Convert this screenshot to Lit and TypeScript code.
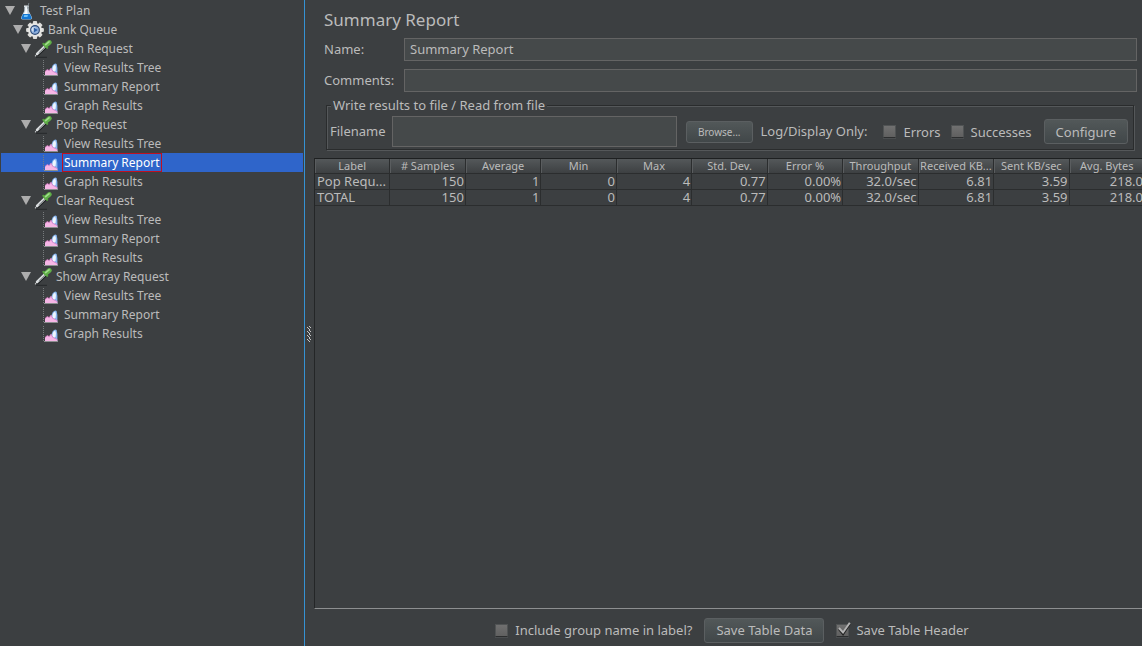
import { LitElement, html, css, svg, nothing } from "lit";
import { customElement } from "lit/decorators.js";
import { classMap } from "lit/directives/class-map.js";

type Kind = "plan" | "group" | "sampler" | "listener";
interface TreeNode {
  label: string;
  kind: Kind;
  selected?: boolean;
}

const requests = ["Push Request", "Pop Request", "Clear Request", "Show Array Request"];
const listeners = ["View Results Tree", "Summary Report", "Graph Results"];

const nodes: TreeNode[] = [
  { label: "Test Plan", kind: "plan" },
  { label: "Bank Queue", kind: "group" },
  ...requests.flatMap((r): TreeNode[] => [
    { label: r, kind: "sampler" },
    ...listeners.map((l): TreeNode => ({
      label: l,
      kind: "listener",
      selected: r === "Pop Request" && l === "Summary Report",
    })),
  ]),
];

const columns = [
  "Label", "# Samples", "Average", "Min", "Max", "Std. Dev.",
  "Error %", "Throughput", "Received KB...", "Sent KB/sec", "Avg. Bytes",
];
const rows = [
  ["Pop Requ...", "150", "1", "0", "4", "0.77", "0.00%", "32.0/sec", "6.81", "3.59", "218.0"],
  ["TOTAL", "150", "1", "0", "4", "0.77", "0.00%", "32.0/sec", "6.81", "3.59", "218.0"],
];

const teeth = [0, 45, 90, 135, 180, 225, 270, 315];

const icons = {
  plan: html`<svg class="icon" viewBox="0 0 18 18" aria-hidden="true">
    <path d="M6.4 4.5 L6.2 9 L3 15.6 Q2.6 17.6 4.6 17.6 H12.4 Q14.4 17.6 14 15.6 L10.8 9 L10.6 4.5Z" fill="#c3d0da"/>
    <path d="M7.4 5 L7.2 9.4 L5.4 12.6 H9.6 L8.8 5Z" fill="#f8fbfd"/>
    <path d="M5 12 H12 L13.6 15.8 Q13.7 17.2 12.4 17.2 H4.6 Q3.3 17.2 3.5 15.8Z" fill="#1478d4"/>
    <path d="M6.2 13 H10 L9.4 15 H5.8Z" fill="#6cc0fa"/>
    <path d="M6 4.2 H11" stroke="#e4ebf0" stroke-width="1.4"/>
    <path d="M9.6 6.6 L10.8 1" stroke="#7b858b" stroke-width="0.9"/>
  </svg>`,
  group: html`<svg class="icon" viewBox="0 0 18 18" aria-hidden="true">
    ${teeth.map((a) => svg`<rect x="6.9" y="0.1" width="4.2" height="4" rx="1" fill="#dddddb" transform="rotate(${a} 9 9)"/>`)}
    <circle cx="9" cy="9" r="7" fill="#e6e6e4"/>
    <circle cx="9" cy="9" r="4.9" fill="#2b4874"/>
    <circle cx="9" cy="9" r="3.8" fill="#8fb0dc"/>
    <circle cx="7.8" cy="8.4" r="2.4" fill="#d3e1f3"/>
    <path d="M7.8 6.6 L11.8 9 L7.8 11.4Z" fill="#2c5fa6"/>
  </svg>`,
  sampler: html`<svg class="icon" viewBox="0 0 18 18" aria-hidden="true">
    <path d="M2 17.3 H13" stroke="#25282a" stroke-width="1"/>
    <path d="M1.4 15.8 L3 14.2" stroke="#d5d8da" stroke-width="1.2" stroke-linecap="round"/>
    <path d="M3.4 14.2 L11.4 6.6" stroke="#1f2224" stroke-width="4" stroke-linecap="round"/>
    <path d="M3 14 L11 6.2" stroke="#d9dcde" stroke-width="2.6" stroke-linecap="round"/>
    <path d="M4.8 13 L10.8 7.2" stroke="#7d8386" stroke-width="1"/>
    <path d="M9.4 3.8 L13.2 7.8" stroke="#56a03f" stroke-width="2.2" stroke-linecap="round"/>
    <path d="M12 5.2 L15.4 2.4" stroke="#5fae48" stroke-width="4.6" stroke-linecap="round"/>
    <path d="M11.6 4.6 L15 1.8" stroke="#a2dc8c" stroke-width="1.6" stroke-linecap="round"/>
  </svg>`,
  listener: html`<svg class="icon" viewBox="0 0 18 18" aria-hidden="true">
    <path d="M1.5 1 V17" stroke="#777b7d" stroke-width="1" stroke-dasharray="1 1"/>
    <path d="M2 16.5 H16" stroke="#8c8f90" stroke-width="1"/>
    <path d="M9 16 V10.6 L10.6 6.4 Q13 3.4 14.6 5 L15.4 9 V16Z" fill="#86b4ee"/>
    <path d="M10.4 10.6 Q10.6 6.6 13.2 5.6 Q14.8 8.4 13.6 11.8 L11.6 13.2Z" fill="#eef6ff"/>
    <path d="M3 16 V12.6 L5.2 10.6 L7.2 11.6 L9 9.2 L10.6 12.2 L15.4 14.8 V16Z" fill="#f6b6e6"/>
    <path d="M3 12.6 L5.2 10.6 L7.2 11.6 L9 9.2 L10.6 12.2 L15.4 14.6" stroke="#dc7cc8" stroke-width="0.8" fill="none"/>
  </svg>`,
};

@customElement("plan-tree")
class PlanTree extends LitElement {
  static styles = css`
    :host { display: block; padding: 1px 1px 0; font-size: 12px; }
    .tree { list-style: none; margin: 0; padding: 0; }
    .row { display: flex; align-items: center; height: 19px; color: #bbbbbb; white-space: nowrap; }
    .plan { padding-left: 4px; }
    .group { padding-left: 12px; }
    .sampler { padding-left: 20px; }
    .listener { padding-left: 41px; }
    .selected { background: #2f65ca; color: #ffffff; }
    .arrow { flex: none; width: 10px; height: 9px; margin-right: 3px; }
    .icon { flex: none; width: 18px; height: 18px; }
    .label { padding: 0 1px; margin-left: 2px; line-height: 17px; border: 1px solid transparent; }
    .selected .label { border-color: #c01020; }
  `;

  render() {
    return html`<ul class="tree" role="tree" aria-label="Test plan">
      ${nodes.map((n) => html`
        <li role="treeitem" aria-selected=${n.selected ? "true" : "false"}
          class=${classMap({ row: true, [n.kind]: true, selected: !!n.selected })}>
          ${n.kind === "listener" ? nothing : html`<svg class="arrow" viewBox="0 0 10 9" aria-hidden="true"><path d="M0 0 H10 L5 9Z" fill="#adadad"/></svg>`}
          ${icons[n.kind]}
          <span class="label">${n.label}</span>
        </li>`)}
    </ul>`;
  }
}

@customElement("check-option")
class CheckOption extends LitElement {
  static properties = { label: {}, checked: { type: Boolean } };
  declare label: string;
  declare checked: boolean;

  static styles = css`
    :host { display: block; }
    .option { display: flex; align-items: center; gap: 7px; white-space: nowrap; }
    .wrap { position: relative; display: flex; }
    .box {
      appearance: none; width: 13px; height: 13px; margin: 0;
      background: linear-gradient(#707070, #606060);
      border: 1px solid #505354; border-bottom-color: #2c2e2f;
      box-shadow: 0 1px 0 #4a4d4f;
    }
    .tick { position: absolute; left: 0; top: -3px; width: 16px; height: 16px; pointer-events: none; display: none; }
    .box:checked + .tick { display: block; }
  `;

  render() {
    return html`<label class="option">
      <span class="wrap">
        <input class="box" type="checkbox" .checked=${!!this.checked} />
        <svg class="tick" viewBox="0 0 16 16" aria-hidden="true">
          <path d="M3 8 L7 13 L13.5 3" fill="none" stroke="#222222" stroke-width="2.4"/>
          <path d="M3 7 L7 11.5 L13.8 1.8" fill="none" stroke="#b4b4b4" stroke-width="2"/>
        </svg>
      </span>
      <span>${this.label}</span>
    </label>`;
  }
}

@customElement("summary-table")
class SummaryTable extends LitElement {
  static styles = css`
    :host {
      display: block; overflow: hidden; min-width: 0;
      border-top: 1px solid #1e2021; border-left: 1px solid #242627;
      border-bottom: 1px solid #8d8f90;
    }
    .table { table-layout: fixed; width: calc(100% + 3px); border-collapse: separate; border-spacing: 0; }
    .head, .cell { box-sizing: border-box; white-space: nowrap; border-right: 1px solid #2b2d2e; }
    .head {
      height: 15px; line-height: 14px; padding: 0; font-size: 11px; font-weight: 400; text-align: center;
      border-bottom: 1px solid #2b2d2e; background: linear-gradient(#54585a, #3d4042);
      box-shadow: inset 1px 0 0 #5a5d5f;
    }
    .cell { height: 16px; line-height: 15px; padding: 0 1px 0 2px; text-align: right; border-bottom: 1px solid #2b2d2e; }
    .name { text-align: left; }
  `;

  render() {
    return html`<table class="table">
      <thead><tr>${columns.map((c) => html`<th class="head" scope="col">${c}</th>`)}</tr></thead>
      <tbody>
        ${rows.map((r) => html`<tr>${r.map((v, i) => html`<td class=${classMap({ cell: true, name: i === 0 })}>${v}</td>`)}</tr>`)}
      </tbody>
    </table>`;
  }
}

@customElement("app-root")
class AppRoot extends LitElement {
  static styles = css`
    :host {
      display: grid; grid-template-columns: 304px 10px minmax(0, 1fr);
      height: 100vh; overflow: hidden; background: #3c3f41; color: #bbbbbb;
      font: 13px/16px "Noto Sans", "Open Sans", sans-serif;
    }
    .splitter { display: flex; align-items: center; border-left: 1px solid #3592d4; box-sizing: border-box; padding: 22px 0 0 1px; }
    .grip { width: 6px; height: 16px; }
    .main { display: flex; flex-direction: column; min-width: 0; }
    .title { margin: 0; padding: 10px 10px 8px; font-size: 17px; line-height: 20px; font-weight: 400; }
    .field { display: flex; align-items: center; padding: 0 5px 8px 10px; }
    .field-label { flex: none; width: 80px; padding-bottom: 2px; }
    .text {
      flex: 1; min-width: 0; box-sizing: border-box; height: 23px; padding: 0 5px 2px; margin: 0;
      font: inherit; color: inherit; background: #45494a; border: 1px solid #646464; outline: none;
    }
    .files {
      display: flex; align-items: center; min-width: 0; margin: -3px 8px 0 12px; padding: 3px 5px 2px 3px;
      border: 1px solid #2a2c2d; box-shadow: inset 1px 1px 0 #55585a, 1px 1px 0 #55585a;
    }
    .legend { padding: 0 2px; margin-left: 1px; line-height: 16px; background: #3c3f41; }
    .file-label { padding-bottom: 2px; }
    .filename { height: 31px; margin: 0 9px 0 6px; }
    .button {
      flex: none; box-sizing: border-box; height: 25px; padding: 0 11px; margin: 0; font: inherit; color: inherit;
      background: linear-gradient(#525859, #414749); border: 1px solid #5b5f61; border-radius: 3px;
    }
    .small { height: 22px; font-size: 10px; }
    .log { flex: none; margin: 0 16px 0 8px; padding-bottom: 2px; }
    .options { display: flex; gap: 10px; margin-right: 12px; }
    .results { flex: 1; margin-top: 8px; }
    .footer { display: flex; align-items: center; justify-content: center; gap: 12px; height: 37px; padding: 5px 0 0 8px; box-sizing: border-box; }
  `;

  render() {
    const dots = [0, 4, 8, 12];
    return html`
      <plan-tree></plan-tree>
      <div class="splitter" role="separator" aria-orientation="vertical">
        <svg class="grip" viewBox="0 0 6 16" aria-hidden="true">
          ${dots.map((y) => svg`
            <path d="M1 ${y + 1} h1 v1 h1 v1 h1 v1 h-1 v-1 h-1 v-1 h-1z M3 ${y} h1 v1 h-1z M4 ${y + 1} h1 v1 h-1z" fill="#c8c8c8"/>`)}
        </svg>
      </div>
      <main class="main">
        <h1 class="title">Summary Report</h1>
        <div class="field">
          <label class="field-label" for="name">Name:</label>
          <input class="text" id="name" type="text" value="Summary Report" />
        </div>
        <div class="field">
          <label class="field-label" for="comments">Comments:</label>
          <input class="text" id="comments" type="text" />
        </div>
        <fieldset class="files">
          <legend class="legend">Write results to file / Read from file</legend>
          <label class="file-label" for="filename">Filename</label>
          <input class="text filename" id="filename" type="text" />
          <button class="button small" type="button">Browse...</button>
          <span class="log">Log/Display Only:</span>
          <div class="options">
            <check-option label="Errors"></check-option>
            <check-option label="Successes"></check-option>
          </div>
          <button class="button" type="button">Configure</button>
        </fieldset>
        <summary-table class="results"></summary-table>
        <div class="footer">
          <check-option label="Include group name in label?"></check-option>
          <button class="button" type="button">Save Table Data</button>
          <check-option label="Save Table Header" checked></check-option>
        </div>
      </main>
    `;
  }
}
